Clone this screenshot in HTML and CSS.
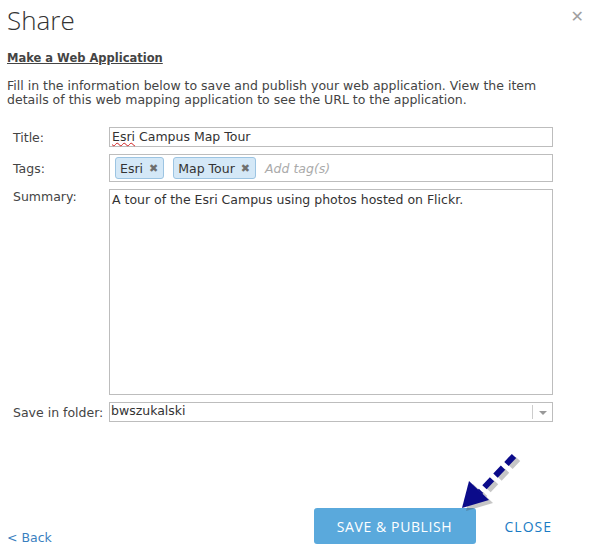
FILE: index.html
```html
<!DOCTYPE html>
<html lang="en">
  <head>
    <meta charset="utf-8" />
    <title>Share</title>
    <link rel="stylesheet" href="styles.css">
  </head>
  <body>
    <div class="dialog">
      <div class="dialog-head">
        <h1 class="dialog-title">Share</h1>
        <span class="dialog-close">&#x2715;</span>
      </div>

      <h2 class="section-title">Make a Web Application</h2>
      <p class="intro">
        Fill in the information below to save and publish your web application. View the item<br />
        details of this web mapping application to see the URL to the application.
      </p>

      <div class="form">
        <label class="form-label">Title:</label>
        <div class="field field-text"><span class="spell">Esri</span> Campus Map Tour</div>

        <label class="form-label">Tags:</label>
        <div class="field field-tags">
          <span class="tag">Esri <span class="tag-x">&#x2716;</span></span>
          <span class="tag">Map Tour <span class="tag-x">&#x2716;</span></span>
          <span class="tag-placeholder">Add tag(s)</span>
        </div>

        <label class="form-label label-top">Summary:</label>
        <div class="field field-area">A tour of the Esri Campus using photos hosted on Flickr.</div>

        <label class="form-label">Save in folder:</label>
        <div class="field field-select">
          <span class="select-value">bwszukalski</span>
          <span class="select-arrow"></span>
        </div>
      </div>

      <div class="dialog-foot">
        <a class="back-link" href="#">&lt; Back</a>
        <div class="actions">
          <button class="btn-primary">SAVE &amp; PUBLISH</button>
          <a class="btn-link" href="#">CLOSE</a>
        </div>
      </div>

      <!-- callout arrow pointing at the publish button -->
      <svg class="callout" width="80" height="80" viewBox="0 0 80 80">
        <g transform="translate(4,3)" opacity="0.3">
          <line x1="60" y1="6" x2="26" y2="42" stroke="#444" stroke-width="6" stroke-dasharray="11 5" />
          <polygon points="8,58 15,31 35,50" fill="#444" />
        </g>
        <line x1="60" y1="6" x2="26" y2="42" stroke="#0b0b8a" stroke-width="6" stroke-dasharray="11 5" />
        <polygon points="8,58 15,31 35,50" fill="#0b0b8a" />
      </svg>
    </div>
  </body>
</html>
```

FILE: styles.css
```css
html {
  height: 100%;
}

body {
  margin: 0;
  height: 100%;
  background: #fff;
  font-family: "DejaVu Sans", Verdana, sans-serif;
  color: #444;
}

.dialog {
  position: relative;
  height: 100%;
  box-sizing: border-box;
  padding: 0 7px;
  display: flex;
  flex-direction: column;
}

.dialog-head {
  display: flex;
  justify-content: space-between;
  align-items: flex-start;
  height: 44px;
}

.dialog-title {
  margin: 4px 0 0 0;
  font-family: "Open Sans", "Noto Sans", sans-serif;
  font-weight: 300;
  font-size: 26px;
  line-height: 32px;
  color: #333;
}

.dialog-close {
  margin: 7px 1px 0 0;
  font-size: 16px;
  color: #a0a0a0;
  font-family: "DejaVu Sans", sans-serif;
}

.section-title {
  margin: 7px 0 0 0;
  font-size: 11.5px;
  line-height: 14px;
  font-weight: bold;
  text-decoration: underline;
  color: #444;
}

.intro {
  margin: 14px 0 0 0;
  font-size: 12.5px;
  line-height: 14px;
  color: #444;
  white-space: nowrap;
}

.form {
  margin-top: 20px;
  display: grid;
  grid-template-columns: 96px 444px;
  row-gap: 7px;
  padding-left: 6px;
}

.form-label {
  font-size: 12.5px;
  color: #444;
  display: flex;
  align-items: center;
}

.label-top {
  align-items: flex-start;
}

.field {
  box-sizing: border-box;
  border: 1px solid #bdbdbd;
  background: #fff;
  font-size: 12.5px;
  color: #333;
}

.field-text {
  height: 20px;
  line-height: 18px;
  padding-left: 2px;
}

.spell {
  text-decoration: underline wavy #d02020;
  text-decoration-thickness: 1px;
}

.field-tags {
  height: 28px;
  display: flex;
  align-items: center;
  gap: 9px;
  padding-left: 5px;
}

.tag {
  display: flex;
  align-items: center;
  gap: 6px;
  height: 22px;
  box-sizing: border-box;
  padding: 0 5px 0 4px;
  background: #d4e8f7;
  border: 1px solid #9cc4e2;
  border-radius: 3px;
  color: #333;
}

.tag-x {
  font-size: 11px;
  color: #6f6f6f;
}

.tag-placeholder {
  font-style: italic;
  color: #aaa;
}

.field-area {
  height: 206px;
  padding: 2px 2px;
  line-height: 16px;
}

.field-select {
  height: 20px;
  display: flex;
  align-items: stretch;
}

.select-value {
  flex: 1;
  line-height: 16px;
  padding-left: 1px;
}

.select-arrow {
  width: 19px;
  border-left: 1px solid #ccc;
  margin: 2px 0;
  position: relative;
}

.select-arrow::after {
  content: "";
  position: absolute;
  left: 6px;
  top: 6px;
  border-style: solid;
  border-width: 4px 4px 0 4px;
  border-color: #999 transparent transparent transparent;
}

.dialog-foot {
  margin-top: auto;
  display: flex;
  justify-content: space-between;
  align-items: flex-end;
  padding-bottom: 10px;
}

.back-link {
  font-size: 12.5px;
  color: #3a7fbf;
  text-decoration: none;
  margin-bottom: -1px;
}

.actions {
  display: flex;
  align-items: center;
  gap: 29px;
  margin-right: 33px;
}

.btn-primary {
  width: 162px;
  height: 36px;
  border: 0;
  border-radius: 3px;
  background: #5aa9dc;
  color: #fff;
  font-family: "Open Sans", "DejaVu Sans", sans-serif;
  font-size: 14px;
  letter-spacing: 0.6px;
}

.btn-link {
  font-family: "Open Sans", "DejaVu Sans", sans-serif;
  font-size: 14px;
  letter-spacing: 1px;
  color: #1a7bc4;
  text-decoration: none;
}

.callout {
  position: absolute;
  left: 454px;
  top: 450px;
}
```
